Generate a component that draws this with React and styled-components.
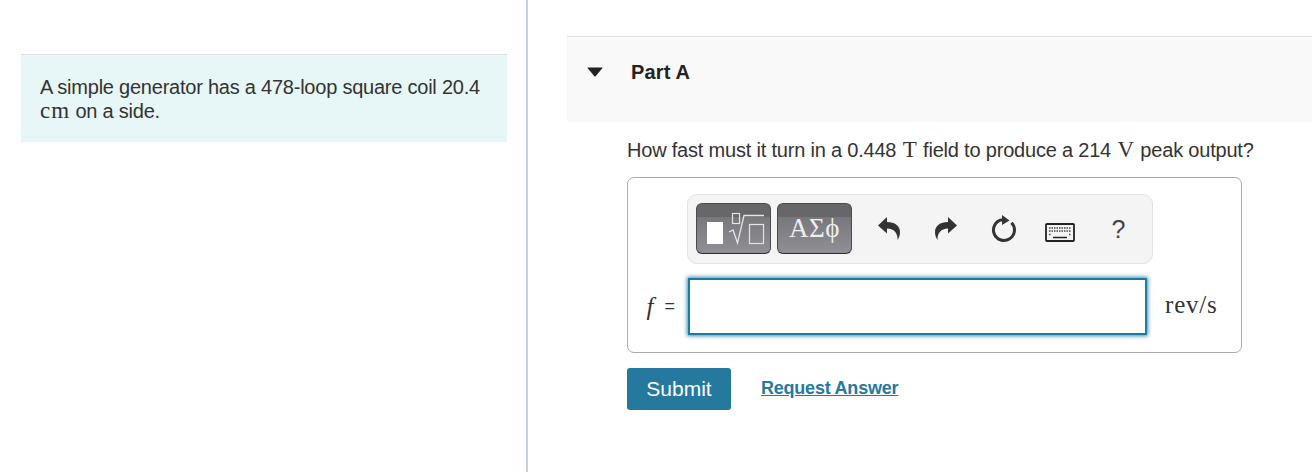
import styled, { createGlobalStyle } from "styled-components";

const GlobalStyle = createGlobalStyle`
  html, body {
    margin: 0;
    padding: 0;
    background: #fff;
  }
  body {
    font-family: "Liberation Sans", Arial, sans-serif;
    color: #333;
  }
`;

const Page = styled.div`
  display: flex;
  width: 1312px;
  height: 472px;
  overflow: hidden;
`;

const LeftColumn = styled.aside`
  box-sizing: border-box;
  width: 528px;
  flex: none;
  padding: 54px 19px 0 21px;
  border-right: 2px solid #c3cfe2;
`;

const Intro = styled.div`
  box-sizing: border-box;
  height: 88px;
  padding: 20px 19px 0;
  background: #e7f6f6;
  border-top: 1px solid #e0e0e0;
  font-size: 20px;
  line-height: 24px;
  letter-spacing: -0.23px;
`;

const Math = styled.span`
  margin: 0 ${(p) => p.$pad || 0}px;
  font-family: "Liberation Serif", "Times New Roman", serif;
  font-size: ${(p) => p.$size || 22}px;
  font-style: ${(p) => (p.$italic ? "italic" : "normal")};
  line-height: 1;
  letter-spacing: ${(p) => p.$spacing || 0}px;
`;

const RightColumn = styled.main`
  flex: 1;
  min-width: 0;
  padding: 36px 0 0 39px;
`;

const PartHeader = styled.header`
  box-sizing: border-box;
  display: flex;
  align-items: flex-start;
  height: 86px;
  padding: 24px 0 0 20px;
  background: #f9f9f9;
  border-top: 1px solid #e0e0e0;
`;

const Caret = styled.svg`
  width: 16px;
  height: 10px;
  margin: 6px 28px 0 0;
  flex: none;
`;

const PartTitle = styled.h2`
  margin: 0;
  font-size: 20px;
  line-height: 23px;
  font-weight: 700;
  letter-spacing: 0.15px;
  color: #222;
`;

const PartBody = styled.section`
  padding: 15px 0 0 60px;
`;

const Question = styled.p`
  margin: 0;
  font-size: 20px;
  line-height: 26px;
  letter-spacing: -0.2px;
  white-space: nowrap;
`;

const AnswerBox = styled.div`
  box-sizing: border-box;
  display: flex;
  flex-direction: column;
  width: 615px;
  height: 176px;
  margin-top: 14px;
  padding: 16px 0 0 59px;
  border: 1px solid #aaa;
  border-radius: 7px;
`;

const Toolbar = styled.div`
  box-sizing: border-box;
  display: flex;
  align-items: flex-start;
  width: 466px;
  height: 70px;
  padding: 8px 0 0 8px;
  background: #f4f4f4;
  border: 1px solid #e2e2e2;
  border-radius: 10px;
`;

const TemplateButton = styled.div`
  box-sizing: border-box;
  display: flex;
  align-items: center;
  justify-content: center;
  width: 75px;
  height: 51px;
  margin-right: 6px;
  border: 1px solid #4a4a4c;
  border-bottom-color: #2c2c2e;
  border-radius: 6px;
  background: linear-gradient(
    to bottom,
    #67676a 0,
    #67676a 13px,
    #77777c 13px,
    #8f8f95 100%
  );
  color: #eee;
  font-family: "Liberation Serif", "Times New Roman", serif;
  font-size: 27px;
  letter-spacing: 0.5px;
`;

const ToolIcons = styled.div`
  display: flex;
  margin: 11px 0 0 2px;
`;

const ToolIcon = styled.div`
  display: flex;
  align-items: center;
  justify-content: center;
  width: 57px;
  height: 30px;
  padding: ${(p) => p.$drop || 0}px 0 0 ${(p) => p.$shift || 0}px;
  box-sizing: border-box;
  color: #444;
  font-size: 25px;
`;

const FlipSvg = styled.svg`
  transform: ${(p) => (p.$flip ? "scaleX(-1)" : "none")};
`;

const AnswerRow = styled.div`
  display: flex;
  align-items: center;
  margin: 14px 0 0 -59px;
`;

const VarLabel = styled.label`
  box-sizing: border-box;
  display: flex;
  align-items: center;
  justify-content: flex-end;
  gap: 11px;
  width: 60px;
  padding-right: 13px;
  font-size: 18px;
  white-space: nowrap;
`;

const AnswerInput = styled.input`
  box-sizing: border-box;
  width: 459px;
  height: 57px;
  padding: 0;
  background: #fff;
  border: 2px solid #1f7aa0;
  outline: none;
  box-shadow: 0 0 4px 1px rgba(31, 122, 160, 0.85);
`;

const Unit = styled.span`
  margin: 0 0 4px 18px;
  font-family: "Liberation Serif", "Times New Roman", serif;
  font-size: 25px;
  letter-spacing: 0.8px;
  white-space: nowrap;
`;

const Actions = styled.div`
  display: flex;
  align-items: flex-start;
  margin-top: 15px;
`;

const SubmitButton = styled.button`
  width: 104px;
  height: 42px;
  padding: 0;
  background: #25799f;
  border: none;
  border-radius: 3px;
  color: #fff;
  font-family: "Liberation Sans", Arial, sans-serif;
  font-size: 21px;
`;

const AnswerLink = styled.a`
  margin: 8px 0 0 30px;
  color: #25799f;
  font-size: 18px;
  line-height: 24px;
  font-weight: 700;
  letter-spacing: -0.22px;
  text-decoration: underline;
`;

const ARROW = "M0 8.500L9 0v5c8 0 13 4 13 10 0 3-1 6-2.500 8 .5-6-3-11.500-10.500-11.500v5z";

export default function App() {
  return (
    <Page>
      <GlobalStyle />
      <LeftColumn>
        <Intro>
          A simple generator has a 478-loop square coil 20.4{" "}
          <Math $size={23} $spacing={1}>cm</Math> on a side.
        </Intro>
      </LeftColumn>
      <RightColumn>
        <PartHeader>
          <Caret viewBox="0 0 17 11">
            <path d="M1 0.5h15c.6 0 .8.6.5 1L9.2 10.200c-.4.4-1 .4-1.400 0L.5 1.500c-.3-.4-.1-1 .5-1z" fill="#222" />
          </Caret>
          <PartTitle>Part A</PartTitle>
        </PartHeader>
        <PartBody>
          <Question>
            How fast must it turn in a 0.448 <Math $size={23} $pad={1}>T</Math> field to produce a 214{" "}
            <Math $size={23} $pad={1}>V</Math> peak output?
          </Question>
          <AnswerBox>
            <Toolbar>
              <TemplateButton>
                <svg width="73" height="49" viewBox="0 0 73 49" fill="none">
                  <rect x="10" y="18" width="16" height="22" fill="#fff" />
                  <rect x="35.500" y="9.500" width="7" height="10" stroke="#e4e4e4" strokeWidth="1.200" />
                  <path d="M32 28l4-2 4.500 13L47 11.500h20" stroke="#e4e4e4" strokeWidth="1.300" />
                  <rect x="52.500" y="20.500" width="14" height="19" stroke="#e4e4e4" strokeWidth="1.200" />
                </svg>
              </TemplateButton>
              <TemplateButton>ΑΣϕ</TemplateButton>
              <ToolIcons>
                <ToolIcon>
                  <FlipSvg width="22" height="24" viewBox="0 0 22 24">
                    <path d={ARROW} fill="#333" />
                  </FlipSvg>
                </ToolIcon>
                <ToolIcon>
                  <FlipSvg $flip width="22" height="24" viewBox="0 0 22 24">
                    <path d={ARROW} fill="#333" />
                  </FlipSvg>
                </ToolIcon>
                <ToolIcon $shift={2}>
                  <svg width="26" height="28" viewBox="0 0 26 28" fill="none">
                    <path d="M20.500 7.700A10.500 10.500 0 1 1 11 4.700" stroke="#333" strokeWidth="3" />
                    <path d="M11 0l7.500 5.500L11 10z" fill="#333" />
                  </svg>
                </ToolIcon>
                <ToolIcon $drop={6} $shift={1}>
                  <svg width="30" height="19" viewBox="0 0 30 19" fill="none">
                    <rect x="1" y="1" width="28" height="17" rx="1" stroke="#222" strokeWidth="1.800" />
                    <path d="M4 5h22M4 8h22M4 11.500h2M24 11.500h2" stroke="#444" strokeWidth="1.500" strokeDasharray="1.500 1" />
                    <path d="M8 14.500h14" stroke="#222" strokeWidth="1.500" />
                  </svg>
                </ToolIcon>
                <ToolIcon $shift={4}>?</ToolIcon>
              </ToolIcons>
            </Toolbar>
            <AnswerRow>
              <VarLabel>
                <Math $italic $size={25}>f</Math>=
              </VarLabel>
              <AnswerInput aria-label="f" />
              <Unit>rev/s</Unit>
            </AnswerRow>
          </AnswerBox>
          <Actions>
            <SubmitButton>Submit</SubmitButton>
            <AnswerLink href="#">Request Answer</AnswerLink>
          </Actions>
        </PartBody>
      </RightColumn>
    </Page>
  );
}
